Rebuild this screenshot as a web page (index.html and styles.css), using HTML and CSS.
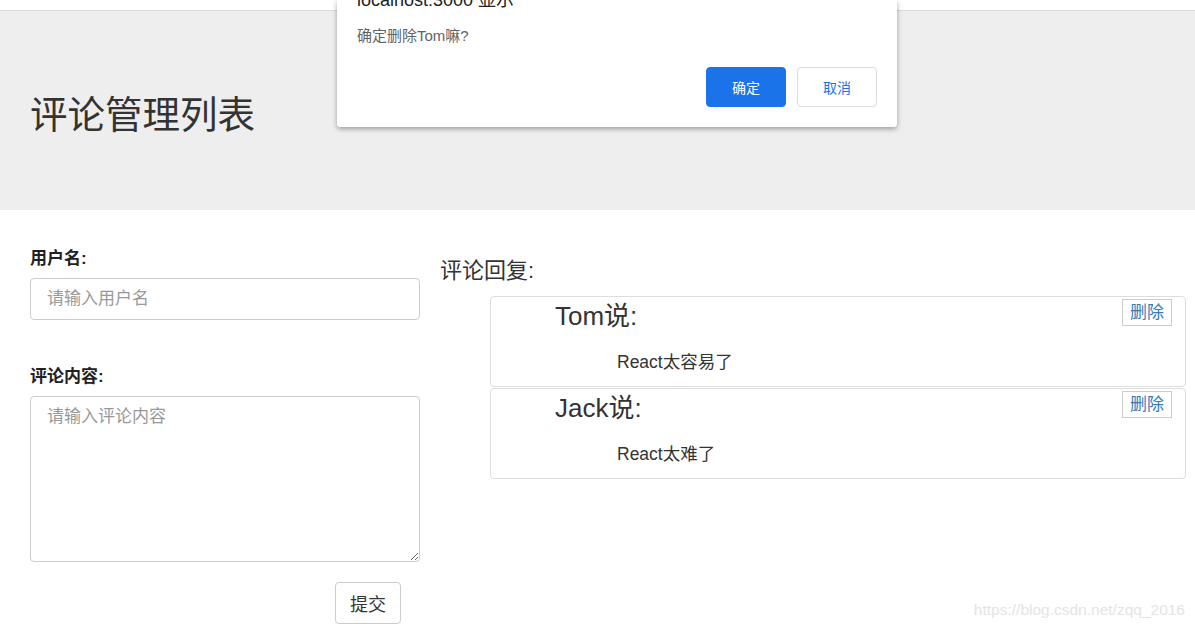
FILE: index.html
```html
<!DOCTYPE html>
<html lang="zh-CN">
<head>
<meta charset="utf-8">
<title>评论管理列表</title>
<link rel="stylesheet" href="styles.css">
</head>
<body>
<div class="topbar"></div>
<header class="jumbotron">
  <h1 class="title">评论管理列表</h1>
</header>
<main class="main">
  <form class="form">
    <label class="label" for="user">用户名:</label>
    <input id="user" class="input" type="text" placeholder="请输入用户名">
    <label class="label label-second" for="content">评论内容:</label>
    <textarea id="content" class="textarea" placeholder="请输入评论内容"></textarea>
    <button type="button" class="submit">提交</button>
  </form>
  <section class="replies">
    <h3 class="replies-title">评论回复:</h3>
    <ul class="list">
      <li class="card">
        <div class="card-head">
          <h2 class="name">Tom说:</h2>
          <a class="del" href="#">删除</a>
        </div>
        <p class="content">React太容易了</p>
      </li>
      <li class="card">
        <div class="card-head">
          <h2 class="name">Jack说:</h2>
          <a class="del" href="#">删除</a>
        </div>
        <p class="content">React太难了</p>
      </li>
    </ul>
  </section>
</main>

<div class="dialog">
  <div class="dialog-title">localhost:3000 显示</div>
  <div class="dialog-msg">确定删除Tom嘛?</div>
  <div class="dialog-actions">
    <button type="button" class="btn btn-ok">确定</button>
    <button type="button" class="btn btn-cancel">取消</button>
  </div>
</div>

<div class="watermark">https://blog.csdn.net/zqq_2016</div>
</body>
</html>
```

FILE: styles.css
```css
html, body {
  margin: 0;
  padding: 0;
  background: #fff;
  overflow: hidden;
}
body {
  font-family: "Liberation Sans", "Noto Sans CJK SC", sans-serif;
  color: #333;
  width: 1195px;
  height: 629px;
  position: relative;
}
.topbar {
  height: 10px;
  background: #fff;
  border-bottom: 1px solid #d9d9d9;
}
.jumbotron {
  background: #eee;
  height: 199px;
  padding-left: 30px;
  box-sizing: border-box;
  padding-top: 82px;
}
.title {
  margin: 0;
  font-size: 37.5px;
  line-height: 44px;
  font-weight: 400;
  color: #333;
}
.main {
  display: flex;
  padding-left: 30px;
  gap: 20px;
}
.form {
  width: 390px;
  display: flex;
  flex-direction: column;
  align-items: flex-start;
  padding-top: 38px;
}
.label {
  font-size: 17px;
  font-weight: 700;
  line-height: 22px;
  margin-bottom: 8px;
  color: #222;
}
.label-second {
  margin-top: 46px;
}
.input, .textarea {
  width: 390px;
  box-sizing: border-box;
  border: 1px solid #ccc;
  border-radius: 4px;
  font-family: "Liberation Sans", "Noto Sans CJK SC", sans-serif;
  font-size: 17px;
  color: #555;
  padding: 0 16px;
  margin: 0;
  outline: none;
}
.input {
  height: 42px;
}
.textarea {
  height: 166px;
  padding-top: 8px;
  line-height: 24px;
  resize: vertical;
}
.input::placeholder, .textarea::placeholder {
  color: #999;
}
.submit {
  margin-top: 20px;
  margin-left: 305px;
  width: 66px;
  height: 42px;
  background: #fff;
  border: 1px solid #ccc;
  border-radius: 4px;
  font-family: "Liberation Sans", "Noto Sans CJK SC", sans-serif;
  font-size: 18px;
  color: #333;
  padding: 0;
}
.replies {
  width: 746px;
  padding-top: 46px;
}
.replies-title {
  margin: 0 0 10px 0;
  font-size: 22px;
  line-height: 30px;
  font-weight: 400;
  color: #333;
}
.list {
  list-style: none;
  margin: 0 0 0 50px;
  padding: 0;
  display: flex;
  flex-direction: column;
  gap: 1px;
}
.card {
  width: 696px;
  box-sizing: border-box;
  border: 1px solid #ddd;
  border-radius: 4px;
  height: 91px;
}
.card-head {
  display: flex;
  justify-content: space-between;
  align-items: flex-start;
}
.name {
  margin: 1px 0 0 64px;
  font-size: 26px;
  line-height: 36px;
  font-weight: 400;
  color: #333;
}
.del {
  margin: 2px 13px 0 0;
  border: 1px solid #ccc;
  font-size: 17px;
  line-height: 23px;
  padding: 1px 7px;
  color: #337ab7;
  text-decoration: none;
}
.content {
  margin: 16px 0 0 126px;
  font-size: 17.5px;
  line-height: 24px;
  color: #333;
}

.dialog {
  position: absolute;
  left: 337px;
  top: 0;
  width: 560px;
  height: 127px;
  box-sizing: border-box;
  background: #fff;
  border-radius: 0 0 3px 3px;
  box-shadow: 0 2px 5px rgba(0, 0, 0, 0.35);
  padding: 0 20px;
  font-family: "Liberation Sans", "Noto Sans CJK SC", sans-serif;
}
.dialog-title {
  margin-top: -12px;
  font-size: 18px;
  line-height: 24px;
  color: #202124;
}
.dialog-msg {
  margin-top: 14px;
  font-size: 15px;
  line-height: 20px;
  color: #5f6368;
}
.dialog-actions {
  display: flex;
  justify-content: flex-end;
  gap: 11px;
  margin-top: 21px;
}
.btn {
  width: 80px;
  height: 40px;
  border-radius: 4px;
  font-family: "Liberation Sans", "Noto Sans CJK SC", sans-serif;
  font-size: 14px;
  padding: 0;
}
.btn-ok {
  background: #1a73e8;
  border: 1px solid #1a73e8;
  color: #fff;
}
.btn-cancel {
  background: #fff;
  border: 1px solid #dadce0;
  color: #1a73e8;
}
.watermark {
  position: absolute;
  right: 10px;
  top: 600px;
  font-family: "Liberation Sans", sans-serif;
  font-size: 15.5px;
  line-height: 20px;
  color: #e4e4e4;
}
```
